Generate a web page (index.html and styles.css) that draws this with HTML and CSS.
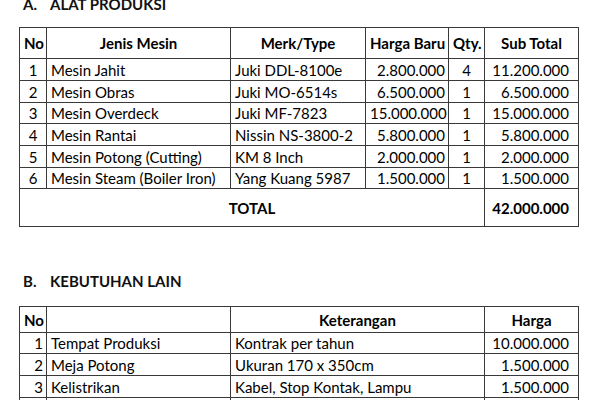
FILE: index.html
```html
<!DOCTYPE html>
<html lang="id">
<head>
<meta charset="utf-8">
<title>Alat Produksi</title>
<link rel="stylesheet" href="styles.css">
</head>
<body>
<div class="page">
  <h2 class="section-title first"><span class="letter">A.</span>ALAT PRODUKSI</h2>
  <table class="sheet tools">
    <colgroup>
      <col class="c-no"><col class="c-name"><col class="c-brand"><col class="c-price"><col class="c-qty"><col class="c-sub">
    </colgroup>
    <thead>
      <tr class="head">
        <th>No</th><th>Jenis Mesin</th><th>Merk/Type</th><th>Harga Baru</th><th>Qty.</th><th>Sub Total</th>
      </tr>
    </thead>
    <tbody>
      <tr class="r22"><td class="center">1</td><td>Mesin Jahit</td><td>Juki DDL-8100e</td><td class="num">2.800.000</td><td class="center">4</td><td class="num last">11.200.000</td></tr>
      <tr class="r22"><td class="center">2</td><td>Mesin Obras</td><td>Juki MO-6514s</td><td class="num">6.500.000</td><td class="center">1</td><td class="num last">6.500.000</td></tr>
      <tr class="r21"><td class="center">3</td><td>Mesin Overdeck</td><td>Juki MF-7823</td><td class="num">15.000.000</td><td class="center">1</td><td class="num last">15.000.000</td></tr>
      <tr class="r22"><td class="center">4</td><td>Mesin Rantai</td><td>Nissin NS-3800-2</td><td class="num">5.800.000</td><td class="center">1</td><td class="num last">5.800.000</td></tr>
      <tr class="r22"><td class="center">5</td><td>Mesin Potong (Cutting)</td><td>KM 8 Inch</td><td class="num">2.000.000</td><td class="center">1</td><td class="num last">2.000.000</td></tr>
      <tr class="r21"><td class="center">6</td><td>Mesin Steam (Boiler Iron)</td><td>Yang Kuang 5987</td><td class="num">1.500.000</td><td class="center">1</td><td class="num last">1.500.000</td></tr>
      <tr class="total"><td colspan="5" class="center bold">TOTAL</td><td class="num last bold">42.000.000</td></tr>
    </tbody>
  </table>

  <h2 class="section-title second"><span class="letter">B.</span>KEBUTUHAN LAIN</h2>
  <table class="sheet other">
    <colgroup>
      <col class="c-no"><col class="c-name"><col class="c-desc"><col class="c-sub">
    </colgroup>
    <thead>
      <tr class="head2">
        <th>No</th><th></th><th>Keterangan</th><th>Harga</th>
      </tr>
    </thead>
    <tbody>
      <tr class="r21"><td class="num">1</td><td>Tempat Produksi</td><td>Kontrak per tahun</td><td class="num last">10.000.000</td></tr>
      <tr class="r22"><td class="num">2</td><td>Meja Potong</td><td>Ukuran 170 x 350cm</td><td class="num last">1.500.000</td></tr>
      <tr class="r22"><td class="num">3</td><td>Kelistrikan</td><td>Kabel, Stop Kontak, Lampu</td><td class="num last">1.500.000</td></tr>
      <tr class="r22"><td></td><td></td><td></td><td></td></tr>
    </tbody>
  </table>
</div>
</body>
</html>
```

FILE: styles.css
```css
html, body {
  margin: 0;
  padding: 0;
  background: #ffffff;
}

body {
  font-family: "Lato", "Liberation Sans", sans-serif;
  font-size: 15px;
  color: #000000;
}

.page {
  padding-left: 19px;
  overflow: hidden;
  height: 400px;
}

.section-title {
  margin: 0;
  font-size: 15px;
  font-weight: 700;
  line-height: 14px;
  padding-left: 4px;
  display: flex;
  color: #111111;
}

.section-title .letter {
  width: 27px;
}

.section-title.first {
  margin-top: -3px;
  margin-bottom: 16px;
}

.section-title.second {
  margin-top: 47px;
  margin-bottom: 18px;
}

.sheet {
  border-collapse: collapse;
  table-layout: fixed;
  width: 559px;
  border: 1px solid #2a2a2a;
}

.sheet th,
.sheet td {
  border: 1px solid #3a3a3a;
  padding: 0 4px;
  white-space: nowrap;
  overflow: hidden;
  text-align: left;
  vertical-align: middle;
  line-height: 18px;
}

.sheet th {
  font-weight: 700;
  text-align: center;
}

.c-no { width: 27px; }
.c-name { width: 184px; }
.c-brand { width: 135px; }
.c-price { width: 83px; }
.c-qty { width: 36px; }
.c-sub { width: 94px; }
.c-desc { width: 254px; }

.head th { height: 30px; }
.head2 th { height: 25px; }
.r22 td { height: 21px; }
.r21 td { height: 20px; }
.total td { height: 37px; }

.sheet .center { text-align: center; }
.sheet .num { text-align: right; padding-right: 3px; }
.sheet .num.last { padding-right: 9px; }
.sheet .bold { font-weight: 700; }
```
